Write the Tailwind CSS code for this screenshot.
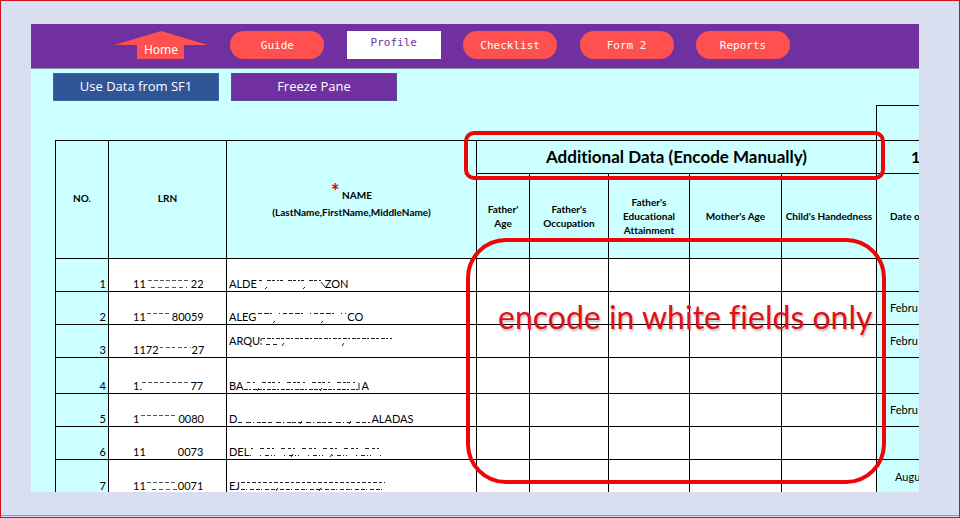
<!DOCTYPE html>
<html lang="en">
<head>
<meta charset="utf-8">
<title>Profile</title>
<script src="https://cdn.jsdelivr.net/npm/@tailwindcss/browser@4"></script>
</head>
<body class="min-h-screen bg-[#d9dff1] font-['Lato',sans-serif] text-black [font-variant-ligatures:none]">
<div class="flex min-h-screen flex-col border border-[#c8141e] pt-[23px] pb-px">
<main class="relative mr-10 mb-[23px] ml-[30px] h-[468px] overflow-hidden bg-[#ccffff]">
  <nav class="h-[45px] border-b border-[#8c8ca8] bg-[#7030a0] pt-[7px] pl-[83px] font-['DejaVu_Sans_Mono',monospace] text-[11px] text-white">
    <div class="flex w-[676px] justify-between">
      <a href="#home" class="relative flex h-7 w-[94px] items-end justify-center font-['Noto_Sans',sans-serif] text-[12px] leading-[18px]">
        <svg class="absolute inset-0 h-7 w-[94px]" viewBox="0 0 94 28" aria-hidden="true"><path d="M0 14 47 0 94 14H70V28H23V14Z" fill="#ff5050"/></svg>
        <span class="relative">Home</span>
      </a>
      <a href="#guide" class="flex h-7 w-[94px] items-center justify-center rounded-full bg-[#ff5050] pt-[3px]">Guide</a>
      <a href="#profile" class="flex h-7 w-[94px] items-center justify-center bg-white pb-1 text-[#7030a0]">Profile</a>
      <a href="#checklist" class="flex h-7 w-[94px] items-center justify-center rounded-full bg-[#ff5050] pt-[3px]">Checklist</a>
      <a href="#form2" class="flex h-7 w-[94px] items-center justify-center rounded-full bg-[#ff5050] pt-[3px]">Form 2</a>
      <a href="#reports" class="flex h-7 w-[94px] items-center justify-center rounded-full bg-[#ff5050] pt-[3px]">Reports</a>
    </div>
  </nav>
  <div class="flex gap-3 pt-1 pl-[22px] font-['Open_Sans',sans-serif] text-[13px] text-white">
    <button type="button" class="h-7 w-[166px] border border-[#3a66a0] bg-[#2f5597]">Use Data from SF1</button>
    <button type="button" class="h-7 w-[166px] border border-[#5b4a9c] bg-[#7030a0]">Freeze Pane</button>
  </div>
  <div class="pt-1 pl-6">
  <table class="w-full table-fixed border-collapse text-[11px] leading-[14px] whitespace-nowrap">
    <colgroup><col class="w-[53px]"><col class="w-[118px]"><col class="w-[250px]"><col class="w-[53px]"><col class="w-[79px]"><col class="w-[81px]"><col class="w-[92px]"><col class="w-[95px]"><col></colgroup>
    <thead class="text-[10px]">
      <tr class="h-[35px]"><td colspan="8"></td><td class="border-t border-l border-black"></td></tr>
      <tr class="h-[33px]">
        <th rowspan="2" class="border border-black pb-1">NO.</th>
        <th rowspan="2" class="border border-black pb-1">LRN</th>
        <th rowspan="2" class="border border-black pt-1 leading-[17px]"><span class="text-[20px] text-red-600">*</span> NAME<br>(LastName,FirstName,MiddleName)</th>
        <th colspan="5" class="border border-black text-[17px]">Additional Data (Encode Manually)</th>
        <th class="overflow-hidden border-y border-l border-black pl-[34px] text-left text-[16px]">1</th>
      </tr>
      <tr class="h-[85px]">
        <th class="border border-black">Father'<br>Age</th>
        <th class="border border-black">Father's<br>Occupation</th>
        <th class="border border-black">Father's<br>Educational<br>Attainment</th>
        <th class="border border-black">Mother's Age</th>
        <th class="border border-black">Child's Handedness</th>
        <th class="overflow-hidden border-y border-l border-black pl-[13px] text-left">Date o</th>
      </tr>
    </thead>
    <tbody>
      <tr class="h-[33px]">
        <td class="border border-black pr-[2px] text-right align-bottom">1</td>
        <td class="border border-black bg-white pl-6 align-bottom"><div class="flex"><span>11</span><svg class="h-[14px] w-[45px]" viewBox="0 0 45 14" fill="none" stroke="#555" aria-hidden="true"><path d="M2 3.500H43" stroke-dasharray="4 2"/><path d="M5 10.500H41" stroke-dasharray="4 3"/></svg><span>22</span></div></td>
        <td class="border border-black bg-white pl-[2px] align-bottom"><div class="flex"><span>ALDE</span><svg class="h-[14px] w-[68px]" viewBox="0 0 68 14" fill="none" stroke="#222" aria-hidden="true"><path d="M2 3.500H65" stroke-dasharray="3 5 4 1 3 2 2 1"/><path d="M8 12l2-2M46 12l2-2M64 5l4 5"/></svg><span>ZON</span></div></td>
        <td class="border border-black bg-white"></td><td class="border border-black bg-white"></td><td class="border border-black bg-white"></td><td class="border border-black bg-white"></td><td class="border border-black bg-white"></td>
        <td class="border-y border-l border-black"></td>
      </tr>
      <tr class="h-[33px]">
        <td class="border border-black pr-[2px] text-right align-bottom">2</td>
        <td class="border border-black bg-white pl-6 align-bottom"><div class="flex"><span>11</span><svg class="h-[14px] w-[26px]" viewBox="0 0 26 14" fill="none" stroke="#555" aria-hidden="true"><path d="M1 3.500H25" stroke-dasharray="4 2"/></svg><span>80059</span></div></td>
        <td class="border border-black bg-white pl-[2px] align-bottom"><div class="flex"><span>ALEG</span><svg class="h-[14px] w-[91px]" viewBox="0 0 91 14" fill="none" stroke="#222" aria-hidden="true"><path d="M2 3.500H90" stroke-dasharray="4 2 5 1 2 7 1 3 4 2"/><path d="M17 13l2-2M65 13l2-2"/></svg><span>CO</span></div></td>
        <td class="border border-black bg-white"></td><td class="border border-black bg-white"></td><td class="border border-black bg-white"></td><td class="border border-black bg-white"></td><td class="border border-black bg-white"></td>
        <td class="overflow-hidden border-y border-l border-black pl-[13px]">Febru</td>
      </tr>
      <tr class="h-[33px]">
        <td class="border border-black pr-[2px] text-right align-bottom">3</td>
        <td class="border border-black bg-white pl-6 align-bottom"><div class="flex"><span>1172</span><svg class="h-[14px] w-[33px]" viewBox="0 0 33 14" fill="none" stroke="#555" aria-hidden="true"><path d="M1 4.500H32" stroke-dasharray="3 3 4 2"/></svg><span>27</span></div></td>
        <td class="border border-black bg-white pl-[2px]"><div class="flex"><span>ARQU</span><svg class="h-[14px] w-[134px]" viewBox="0 0 134 14" fill="none" stroke="#222" aria-hidden="true"><path d="M1 4V11M2 4.500H132" stroke-dasharray="3 2 4 1 2 2 4 1"/><path d="M6 10.500H20" stroke-dasharray="4 3"/><path d="M22 12l2-3M82 12l2-3"/></svg></div></td>
        <td class="border border-black bg-white"></td><td class="border border-black bg-white"></td><td class="border border-black bg-white"></td><td class="border border-black bg-white"></td><td class="border border-black bg-white"></td>
        <td class="overflow-hidden border-y border-l border-black pl-[13px]">Febru</td>
      </tr>
      <tr class="h-9">
        <td class="border border-black pr-[2px] text-right align-bottom">4</td>
        <td class="border border-black bg-white pl-6 align-bottom"><div class="flex"><span>1</span><svg class="h-[14px] w-[51px]" viewBox="0 0 51 14" fill="none" stroke="#555" aria-hidden="true"><path d="M3 3.500H49" stroke-dasharray="4 2"/><path d="M1 10.500H3"/></svg><span>77</span></div></td>
        <td class="border border-black bg-white pl-[2px] align-bottom"><div class="flex"><span>BA</span><svg class="h-[14px] w-[118px]" viewBox="0 0 118 14" fill="none" stroke="#222" aria-hidden="true"><path d="M4 3.500H115" stroke-dasharray="3 3 2 7 4 2 3 1"/><path d="M1 10.500H115" stroke-dasharray="4 1 2 2 4 1"/><path d="M14 12l2-3M77 12l2-3M116 4V11"/></svg><span>A</span></div></td>
        <td class="border border-black bg-white"></td><td class="border border-black bg-white"></td><td class="border border-black bg-white"></td><td class="border border-black bg-white"></td><td class="border border-black bg-white"></td>
        <td class="border-y border-l border-black"></td>
      </tr>
      <tr class="h-[33px]">
        <td class="border border-black pr-[2px] text-right align-bottom">5</td>
        <td class="border border-black bg-white pl-6 align-bottom"><div class="flex"><span>1</span><svg class="h-[14px] w-[39px]" viewBox="0 0 39 14" fill="none" stroke="#555" aria-hidden="true"><path d="M2 3.500H37" stroke-dasharray="4 2"/></svg><span>0080</span></div></td>
        <td class="border border-black bg-white pl-[2px] align-bottom"><div class="flex"><span>D</span><svg class="h-[14px] w-[134px]" viewBox="0 0 134 14" fill="none" stroke="#222" aria-hidden="true"><path d="M1 10.500H115" stroke-dasharray="4 4 5 2 1 3 4 1 4 2"/><path d="M63 12l2-3M112 12l2-3M119 10.500H133" stroke-dasharray="4 2"/></svg><span>ALADAS</span></div></td>
        <td class="border border-black bg-white"></td><td class="border border-black bg-white"></td><td class="border border-black bg-white"></td><td class="border border-black bg-white"></td><td class="border border-black bg-white"></td>
        <td class="overflow-hidden border-y border-l border-black pl-[13px]">Febru</td>
      </tr>
      <tr class="h-[33px]">
        <td class="border border-black pr-[2px] text-right align-bottom">6</td>
        <td class="border border-black bg-white pl-6 align-bottom"><div class="flex gap-8"><span>11</span><span>0073</span></div></td>
        <td class="border border-black bg-white pl-[2px] align-bottom"><div class="flex"><span>DEL</span><svg class="h-[14px] w-[136px]" viewBox="0 0 136 14" fill="none" stroke="#222" aria-hidden="true"><path d="M2 3.500H135" stroke-dasharray="2 7 4 3 3 2"/><path d="M1 10.500H135" stroke-dasharray="1 9 1 4 4 2 1 2"/><path d="M42 12l2-3M81 12l2-3"/></svg></div></td>
        <td class="border border-black bg-white"></td><td class="border border-black bg-white"></td><td class="border border-black bg-white"></td><td class="border border-black bg-white"></td><td class="border border-black bg-white"></td>
        <td class="border-y border-l border-black"></td>
      </tr>
      <tr class="h-[34px]">
        <td class="border border-black pr-[2px] text-right align-bottom">7</td>
        <td class="border border-black bg-white pl-6 align-bottom"><div class="flex"><span>11</span><svg class="h-[14px] w-8" viewBox="0 0 32 14" fill="none" stroke="#555" aria-hidden="true"><path d="M1 3.500H31" stroke-dasharray="4 2"/><path d="M6 10.500H31" stroke-dasharray="4 3"/></svg><span>0071</span></div></td>
        <td class="border border-black bg-white pl-[2px] align-bottom"><div class="flex"><span>EJ</span><svg class="h-[14px] w-[146px]" viewBox="0 0 146 14" fill="none" stroke="#222" aria-hidden="true"><path d="M1 3.500H145" stroke-dasharray="4 2 3 2"/><path d="M1 10.500H145" stroke-dasharray="4 1 1 3 4 2"/><path d="M36 12l2-3M79 12l2-3"/></svg></div></td>
        <td class="border border-black bg-white"></td><td class="border border-black bg-white"></td><td class="border border-black bg-white"></td><td class="border border-black bg-white"></td><td class="border border-black bg-white"></td>
        <td class="overflow-hidden border-y border-l border-black pl-[18px]">Augu</td>
      </tr>
    </tbody>
  </table>
  </div>
  <!-- Callouts drawn over the sheet -->
  <div class="absolute top-[107px] left-[433px] h-[49px] w-[421px] rounded-[10px] border-4 border-[#ee0508]"></div>
  <div class="absolute top-[214px] left-[435px] h-[246px] w-[420px] rounded-[40px] border-4 border-[#ee0508]"></div>
  <p class="absolute top-[273px] left-[467px] text-[32px] leading-10 whitespace-nowrap text-[#e01018] [text-shadow:1px_2px_2px_#0004]">encode in white fields only</p>
</main>
<div class="border-t border-[#b08a9c]"></div>
</div>
</body>
</html>
